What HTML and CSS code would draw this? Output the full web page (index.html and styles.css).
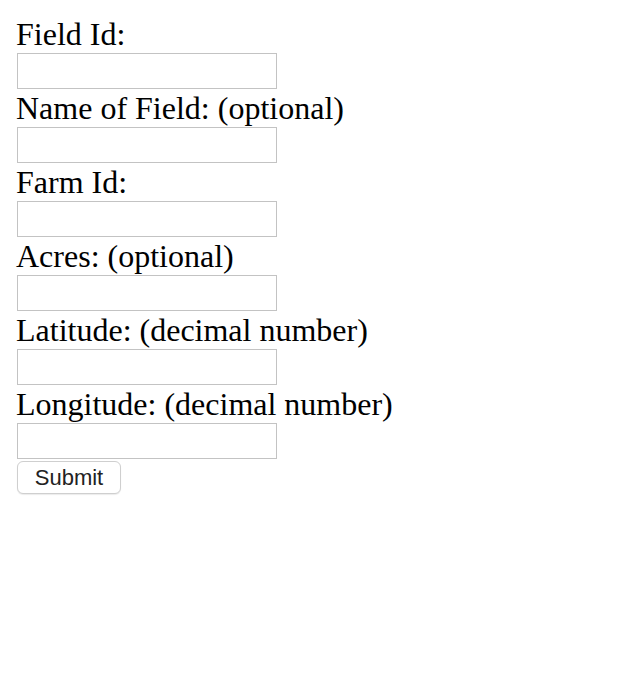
FILE: index.html
```html
<!DOCTYPE html>
<html>
<head>
<meta charset="utf-8">
<link rel="stylesheet" href="styles.css">
</head>
<body>
<form class="form">
  <label class="label" for="f1">Field Id:</label>
  <input class="field" id="f1" type="text">
  <label class="label" for="f2">Name of Field: (optional)</label>
  <input class="field" id="f2" type="text">
  <label class="label" for="f3">Farm Id:</label>
  <input class="field" id="f3" type="text">
  <label class="label" for="f4">Acres: (optional)</label>
  <input class="field" id="f4" type="text">
  <label class="label" for="f5">Latitude: (decimal number)</label>
  <input class="field" id="f5" type="text">
  <label class="label" for="f6">Longitude: (decimal number)</label>
  <input class="field" id="f6" type="text">
  <button class="submit" type="button">Submit</button>
</form>
</body>
</html>
```
FILE: styles.css
```css
html, body {
  margin: 0;
  padding: 0;
  background: #fff;
}
body {
  padding: 15px 16px;
  font-family: "Liberation Serif", "Times New Roman", serif;
  font-size: 32px;
  color: #000;
}
.form {
  display: flex;
  flex-direction: column;
  align-items: flex-start;
}
.label {
  display: block;
  height: 38px;
  line-height: 38px;
  white-space: nowrap;
}
.field {
  box-sizing: border-box;
  width: 260px;
  height: 36px;
  margin: 0 0 0 1px;
  border: 1px solid #c3c3c3;
  background: #fff;
  padding: 0 4px;
  font-size: 20px;
  outline: none;
}
.submit {
  box-sizing: border-box;
  margin: 2px 0 0 1px;
  width: 104px;
  height: 33px;
  border: 1px solid #cfcfcf;
  border-radius: 6px;
  background: #fff;
  box-shadow: 0 1px 1px rgba(0,0,0,0.08);
  font-family: "Liberation Sans", Arial, sans-serif;
  font-size: 22px;
  color: #222;
  padding: 0;
  line-height: 31px;
}
```
